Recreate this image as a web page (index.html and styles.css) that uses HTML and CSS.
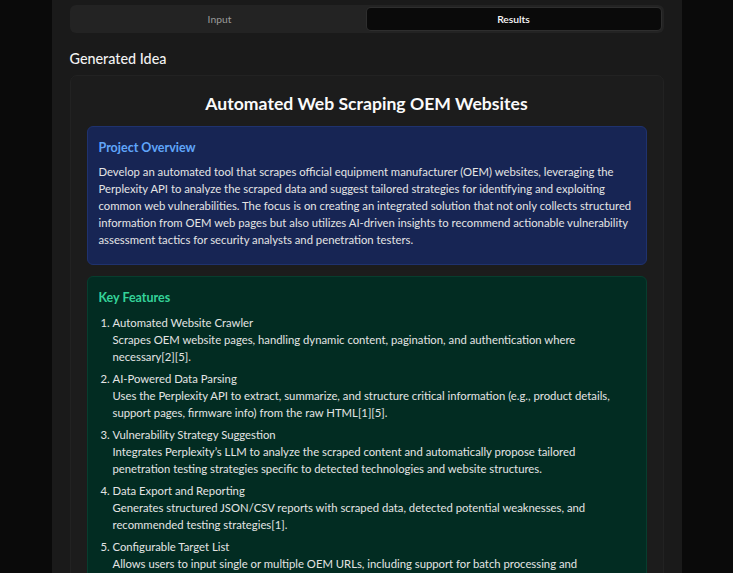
FILE: index.html
```html
<!DOCTYPE html>
<html lang="en">
<head>
<meta charset="utf-8">
<title>Generated Idea</title>
<link rel="stylesheet" href="styles.css">
</head>
<body>
<div class="page">
  <main class="main">
    <div class="tabs">
      <button class="tab">Input</button>
      <button class="tab tab-active">Results</button>
    </div>
    <h2 class="section-title">Generated Idea</h2>
    <article class="card">
      <h1 class="idea-title">Automated Web Scraping OEM Websites</h1>
      <section class="box box-blue">
        <h3 class="box-heading">Project Overview</h3>
        <p class="box-text">Develop an automated tool that scrapes official equipment manufacturer (OEM) websites, leveraging the Perplexity API to analyze the scraped data and suggest tailored strategies for identifying and exploiting common web vulnerabilities. The focus is on creating an integrated solution that not only collects structured information from OEM web pages but also utilizes AI-driven insights to recommend actionable vulnerability assessment tactics for security analysts and penetration testers.</p>
      </section>
      <section class="box box-green">
        <h3 class="box-heading">Key Features</h3>
        <ol class="features">
          <li><span class="feature-name">Automated Website Crawler</span><span class="feature-desc">Scrapes OEM website pages, handling dynamic content, pagination, and authentication where necessary[2][5].</span></li>
          <li><span class="feature-name">AI-Powered Data Parsing</span><span class="feature-desc">Uses the Perplexity API to extract, summarize, and structure critical information (e.g., product details, support pages, firmware info) from the raw HTML[1][5].</span></li>
          <li><span class="feature-name">Vulnerability Strategy Suggestion</span><span class="feature-desc">Integrates Perplexity’s LLM to analyze the scraped content and automatically propose tailored penetration testing strategies specific to detected technologies and website structures.</span></li>
          <li><span class="feature-name">Data Export and Reporting</span><span class="feature-desc">Generates structured JSON/CSV reports with scraped data, detected potential weaknesses, and recommended testing strategies[1].</span></li>
          <li><span class="feature-name">Configurable Target List</span><span class="feature-desc">Allows users to input single or multiple OEM URLs, including support for batch processing and customizable crawl schedules.</span></li>
        </ol>
      </section>
    </article>
  </main>
</div>
</body>
</html>
```

FILE: styles.css
```css
* { box-sizing: border-box; }
html, body { margin: 0; padding: 0; height: 100%; overflow: hidden; }
body {
  background: #0a0a0a;
  color: #e5e5e5;
  font-family: Lato, "Noto Sans", sans-serif;
}
.page { min-height: 100%; }
.main {
  width: 630px;
  margin: 0 auto;
  min-height: 100vh;
  background: #1a1a1a;
  padding: 5px 18px 0;
}
.tabs {
  display: grid;
  grid-template-columns: 1fr 1fr;
  height: 28px;
  padding: 3px;
  background: #232323;
  border-radius: 6px;
}
.tab {
  border: 0;
  background: transparent;
  font-family: inherit;
  font-size: 10.3px;
  color: #9a9a9a;
  border-radius: 4px;
  padding: 0;
}
.tab-active {
  background: #0a0a0a;
  color: #fafafa;
  font-weight: 600;
  box-shadow: 0 0 0 1px #2e2e2e;
}
.section-title {
  margin: 16px 0 6px;
  font-size: 14.35px;
  line-height: 20px;
  font-weight: 500;
  color: #f2f2f2;
}
.card {
  background: #1c1c1c;
  border: 1px solid #222;
  border-radius: 7px;
  padding: 16px 16px 20px;
}
.idea-title {
  margin: 0 0 10px;
  text-align: center;
  font-size: 17.6px;
  line-height: 24px;
  font-weight: 700;
  color: #fafafa;
}
.box {
  border-radius: 6px;
  border: 1px solid;
  padding: 11px 11px 16.5px;
}
.box + .box { margin-top: 11px; }
.box-blue { background: #172554; border-color: #1f326e; }
.box-green { background: #022c22; border-color: #073d2e; }
.box-heading {
  margin: 0 0 4.5px;
  font-size: 12.5px;
  line-height: 20px;
  font-weight: 700;
}
.box-blue .box-heading { color: #60a5fa; }
.box-green .box-heading { color: #34d399; margin-bottom: 5.5px; }
.box-text {
  margin: 0;
  font-size: 11.3px;
  line-height: 17px;
  color: #e4e4e4;
}
.features {
  margin: 0;
  padding: 0 2px 0 14px;
  font-size: 11.3px;
  line-height: 17px;
  color: #e4e4e4;
}
.features li { margin-bottom: 5.2px; }
.feature-name, .feature-desc { display: block; }
```
